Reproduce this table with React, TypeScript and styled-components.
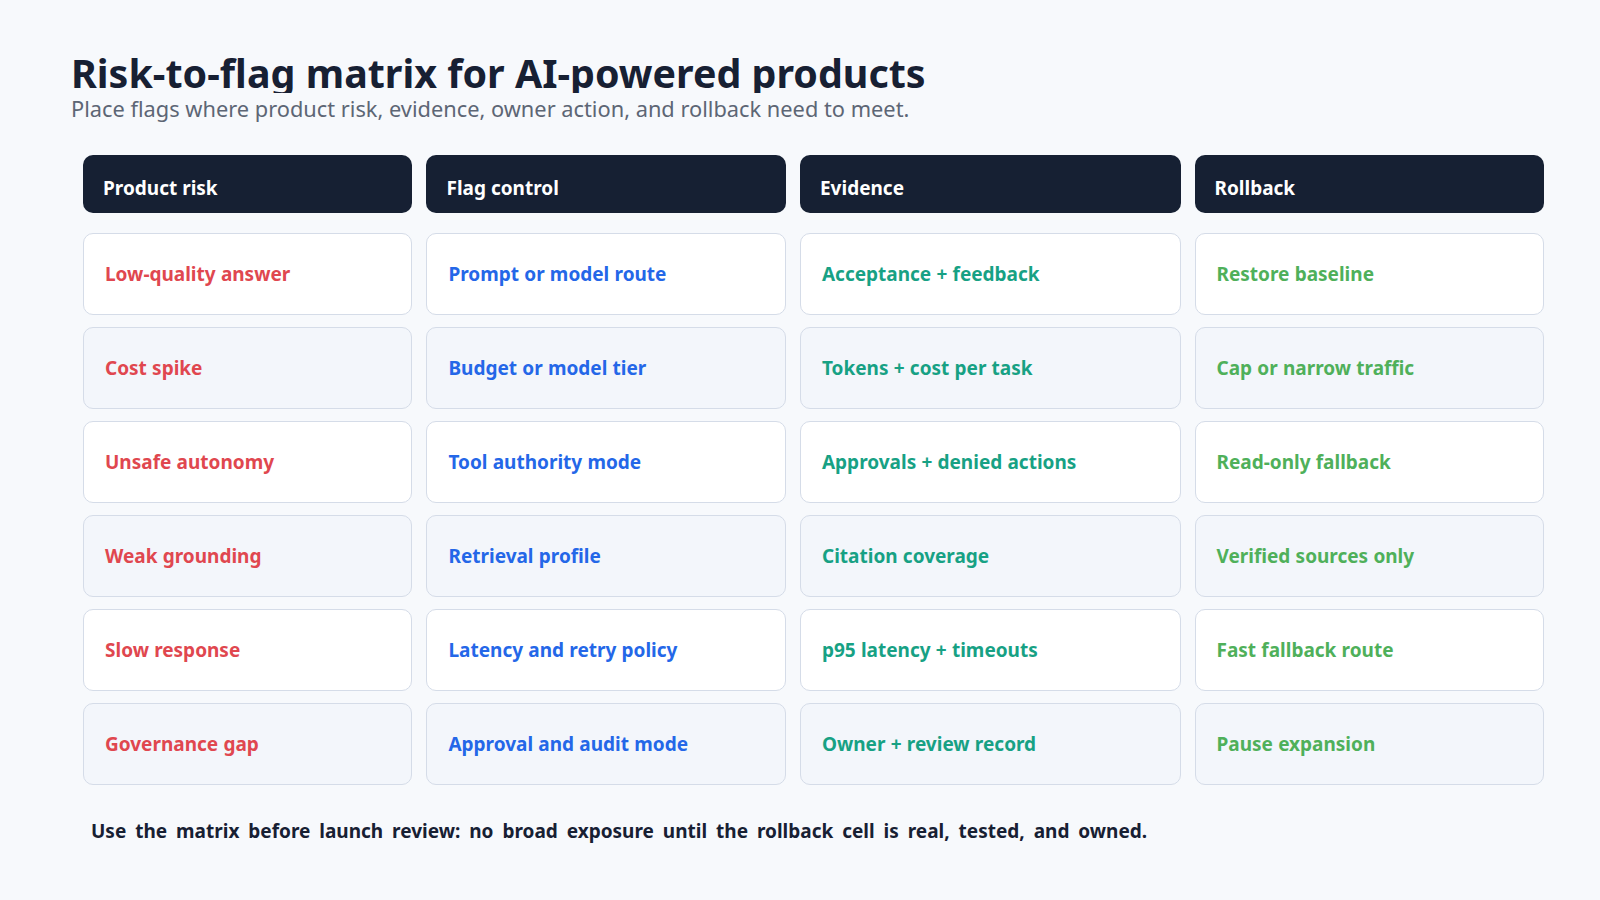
import styled, { createGlobalStyle } from 'styled-components';

type Tone = 'risk' | 'flag' | 'evidence' | 'rollback';

const COLUMNS: { title: string; tone: Tone }[] = [
  { title: 'Product risk', tone: 'risk' },
  { title: 'Flag control', tone: 'flag' },
  { title: 'Evidence', tone: 'evidence' },
  { title: 'Rollback', tone: 'rollback' },
];

const ROWS: string[][] = [
  ['Low-quality answer', 'Prompt or model route', 'Acceptance + feedback', 'Restore baseline'],
  ['Cost spike', 'Budget or model tier', 'Tokens + cost per task', 'Cap or narrow traffic'],
  ['Unsafe autonomy', 'Tool authority mode', 'Approvals + denied actions', 'Read-only fallback'],
  ['Weak grounding', 'Retrieval profile', 'Citation coverage', 'Verified sources only'],
  ['Slow response', 'Latency and retry policy', 'p95 latency + timeouts', 'Fast fallback route'],
  ['Governance gap', 'Approval and audit mode', 'Owner + review record', 'Pause expansion'],
];

const TONE_COLORS: Record<Tone, string> = {
  risk: '#e0474f',
  flag: '#2467e8',
  evidence: '#17a184',
  rollback: '#4fb05a',
};

const GlobalStyle = createGlobalStyle`
  html, body {
    margin: 0;
    padding: 0;
    background: #f7f9fc;
  }
  body {
    font-family: 'Noto Sans', 'Open Sans', sans-serif;
    color: #162033;
  }
`;

const Page = styled.main`
  width: 1600px;
  height: 900px;
  box-sizing: border-box;
  padding: 54px 56px 0 71px;
`;

const Title = styled.h1`
  margin: 0;
  font-size: 39.4px;
  line-height: 1;
  font-weight: 700;
  color: #172033;
  white-space: nowrap;
  overflow: hidden;
`;

const Subtitle = styled.p`
  margin: 1px 0 0;
  font-size: 21.8px;
  line-height: 30px;
  color: #5d6675;
`;

const Matrix = styled.section`
  margin: 31px 0 0 12px;
  display: grid;
  grid-template-columns: 329fr 359fr 380fr 349fr;
  grid-template-rows: 66px;
  grid-auto-rows: 82px;
  column-gap: 14px;
  row-gap: 12px;
`;

const HeadRow = styled.div`
  display: contents;
`;

const HeadCell = styled.div`
  height: 58px;
  box-sizing: border-box;
  align-self: start;
  display: flex;
  align-items: center;
  padding: 7px 20px 0;
  border-radius: 10px;
  background: #162033;
  color: #ffffff;
  font-size: 19px;
  font-weight: 700;
`;

const Cell = styled.div<{ $tone: Tone; $alt: boolean }>`
  display: flex;
  align-items: center;
  padding: 0 21px;
  border: 1px solid #d5dce8;
  border-radius: 10px;
  background: ${p => (p.$alt ? '#f3f6fb' : '#ffffff')};
  color: ${p => TONE_COLORS[p.$tone]};
  font-size: 19px;
  font-weight: 700;
  word-spacing: 0.3px;
`;

const Footnote = styled.p`
  margin: 33px 0 0 20px;
  font-size: 19px;
  line-height: 27px;
  font-weight: 700;
  word-spacing: 4px;
  color: #172033;
`;

export default function App() {
  return (
    <>
      <GlobalStyle />
      <Page>
        <Title>Risk-to-flag matrix for AI-powered products</Title>
        <Subtitle>
          Place flags where product risk, evidence, owner action, and rollback need to meet.
        </Subtitle>
        <Matrix>
          <HeadRow>
            {COLUMNS.map(col => (
              <HeadCell key={col.title}>{col.title}</HeadCell>
            ))}
          </HeadRow>
          {ROWS.map((row, r) =>
            row.map((text, c) => (
              <Cell key={`${r}-${c}`} $tone={COLUMNS[c].tone} $alt={r % 2 === 1}>
                {text}
              </Cell>
            )),
          )}
        </Matrix>
        <Footnote>
          Use the matrix before launch review: no broad exposure until the rollback cell is real,
          tested, and owned.
        </Footnote>
      </Page>
    </>
  );
}
